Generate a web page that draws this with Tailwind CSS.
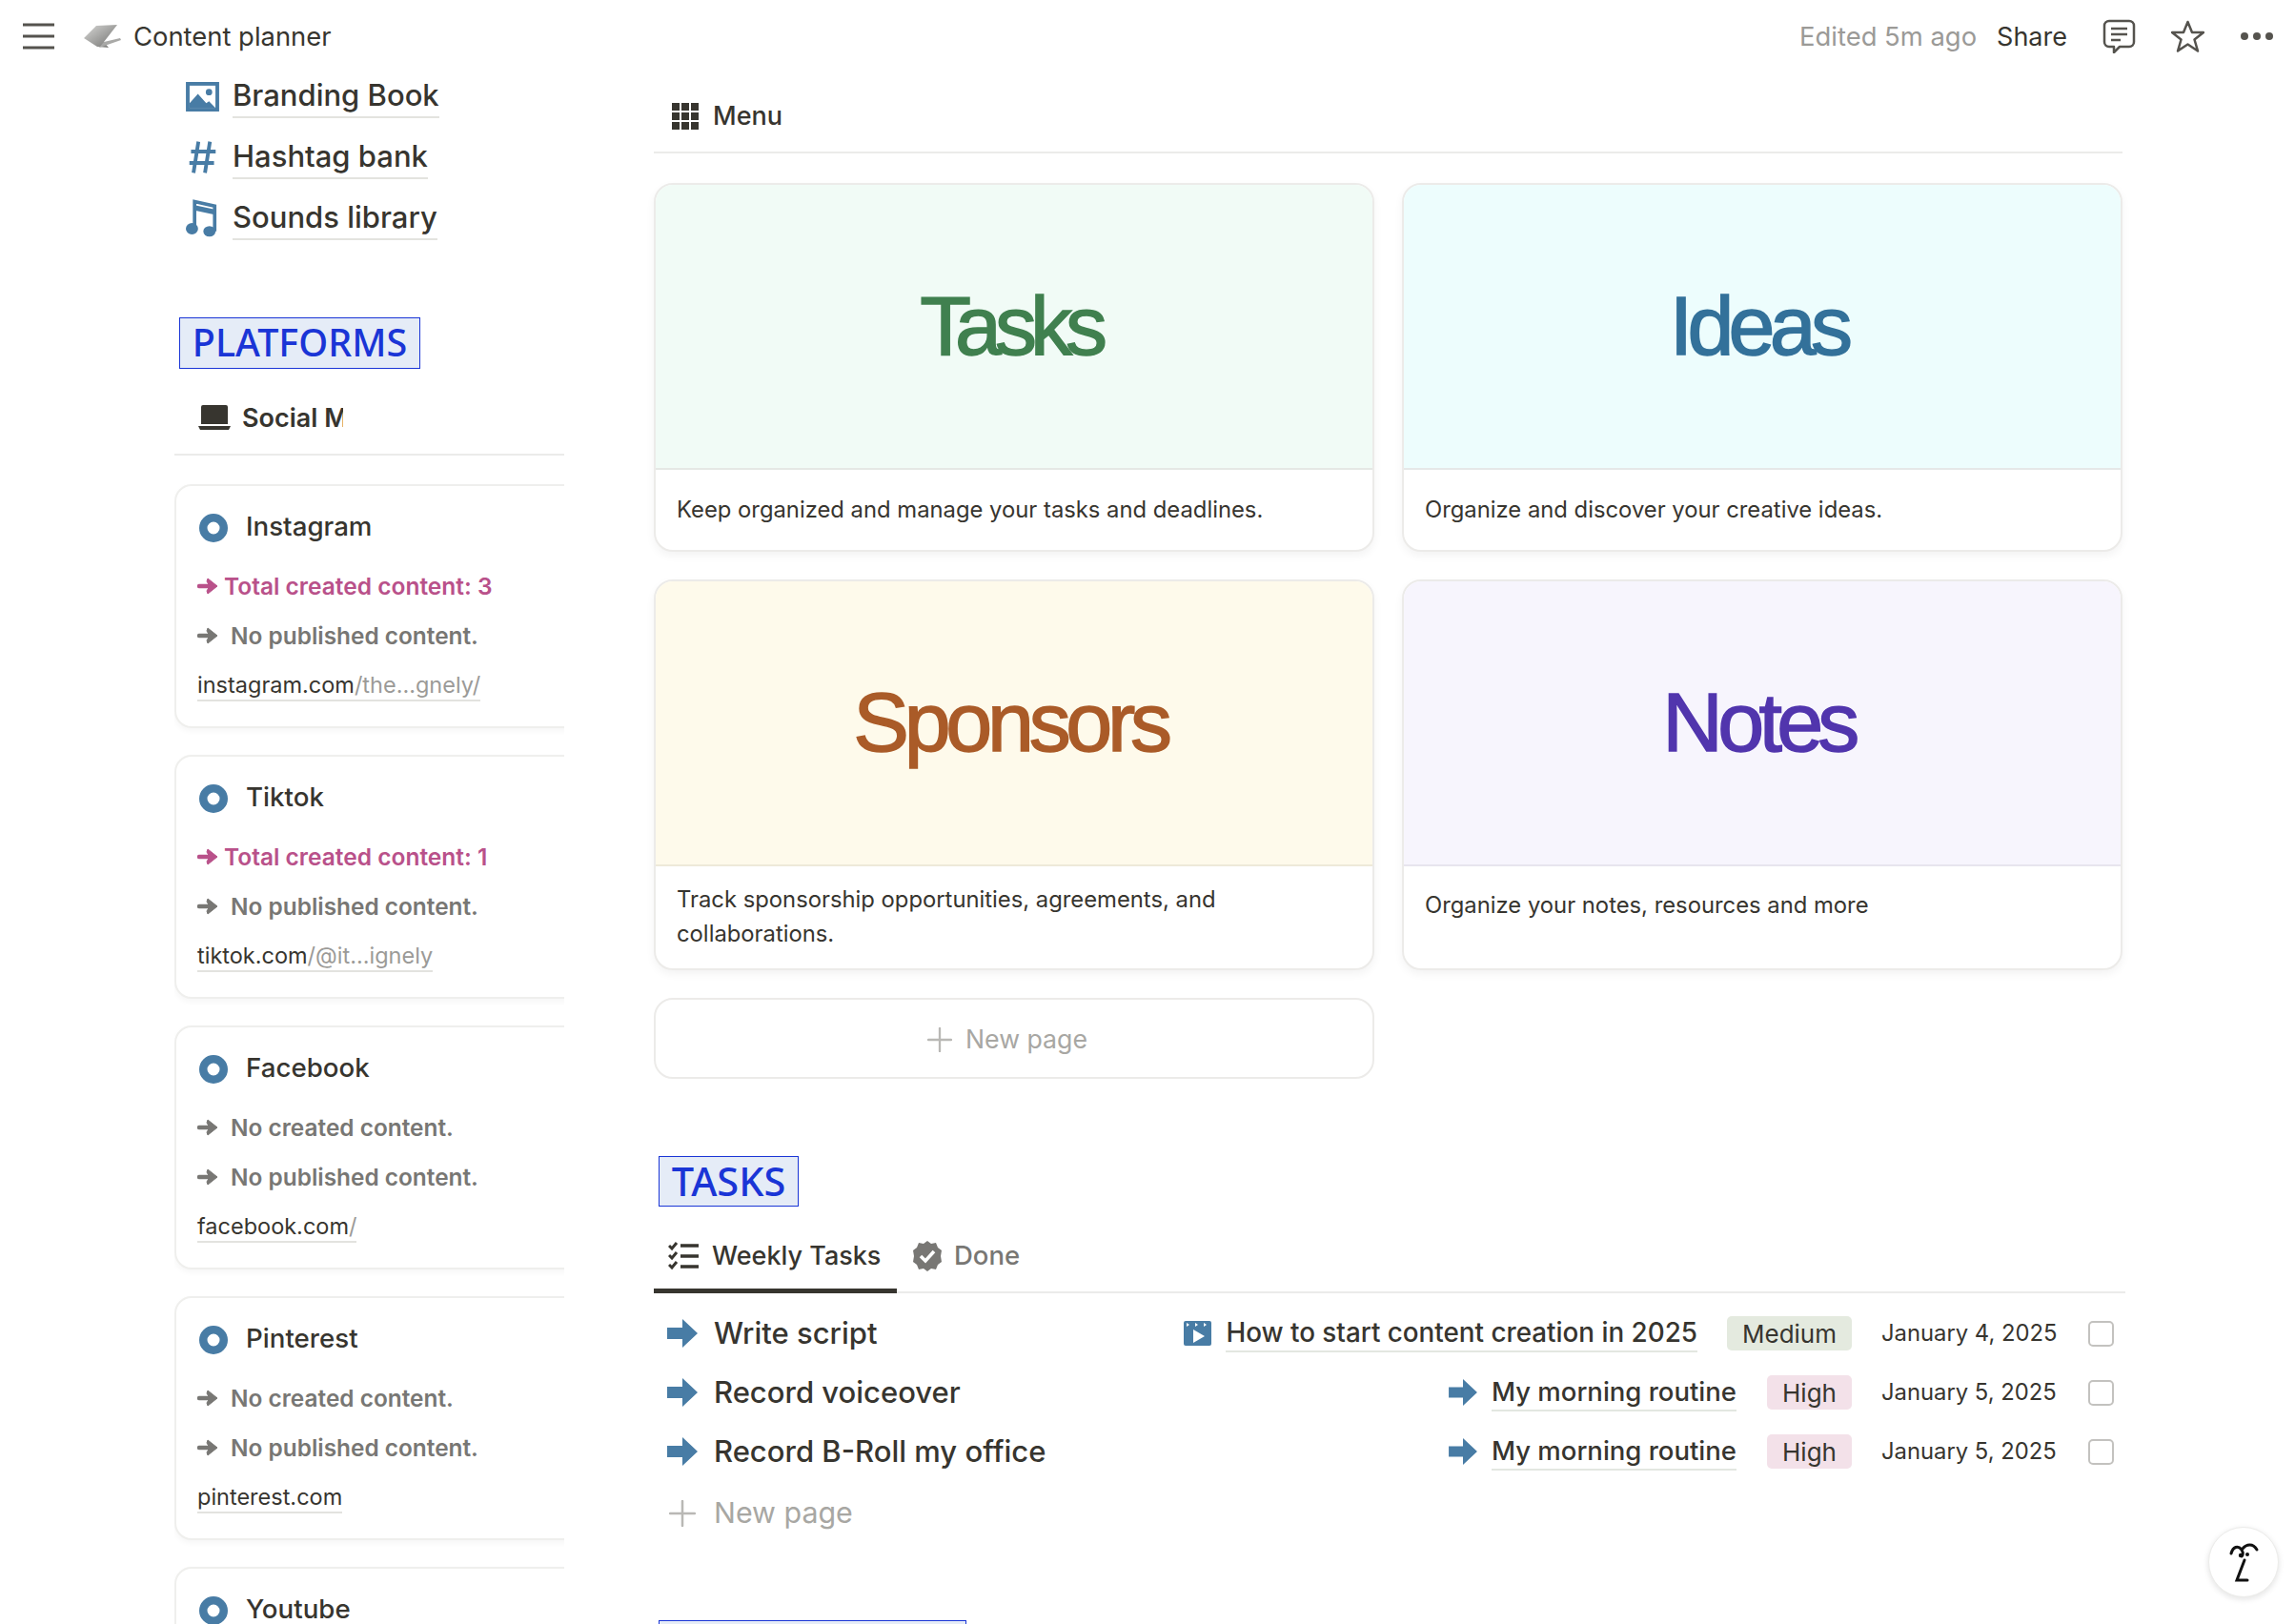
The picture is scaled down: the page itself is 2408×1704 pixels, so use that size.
<!DOCTYPE html>
<html>
<head>
  <title>Content planner</title>
  <script src="https://cdn.jsdelivr.net/npm/@tailwindcss/browser@4"></script>
</head>
<body class="bg-white">
  <svg class="hidden">
    <symbol id="block-arrow" viewBox="0 0 32 30"><path d="M0 9h16V0l16 15-16 15v-9H0z" fill="#487ca5"/></symbol>
    <symbol id="small-arrow" viewBox="0 0 22 18"><path d="M2 9h15" fill="none" stroke="currentColor" stroke-width="4.500" stroke-linecap="round"/><path d="M11 1l10 8-10 8-1-3 3-5-3-5z" fill="currentColor" stroke="currentColor" stroke-width="1" stroke-linejoin="round"/></symbol>
    <symbol id="ring" viewBox="0 0 30 30"><circle cx="15" cy="15" r="10.750" fill="none" stroke="#487ca5" stroke-width="8.500"/></symbol>
    <symbol id="plus" viewBox="0 0 28 28"><path d="M14 1v26M1 14h26" stroke="#b9b8b5" stroke-width="2.500" stroke-linecap="round"/></symbol>
  </svg>

  <div class="relative w-[2408px] h-[1704px] overflow-hidden font-['Inter',sans-serif] text-[#37352f]">
    <!-- top bar -->
    <header class="h-[76px] flex items-center pl-[24px] pr-[22px]">
      <svg class="w-[33px] h-[30px] text-[#55534e]" viewBox="0 0 33 30"><path d="M0 3h33M0 15h33M0 27h33" stroke="currentColor" stroke-width="3"/></svg>
      <svg class="ml-[31px] w-[39px] h-[26px]" viewBox="0 0 39 26">
        <defs><linearGradient id="lid" x1="0" y1="0" x2="1" y2="1"><stop offset="0" stop-color="#d8d8d6"/><stop offset="1" stop-color="#6f6f6d"/></linearGradient></defs>
        <path d="M0 15 13 2l22-1-14 18 5 6-12-1z" fill="url(#lid)"/>
        <path d="M21 19 38 15l1 2-23 8z" fill="#a9a9a7"/>
      </svg>
      <span class="ml-[13px] pt-[2px] text-[27.400px]">Content planner</span>
      <span class="ml-auto pt-[2px] text-[27.400px] text-[#9b9a97]">Edited 5m ago</span>
      <span class="ml-[21px] pt-[2px] text-[27px]">Share</span>
      <svg class="ml-[37px] w-[35px] h-[36px] text-[#55534e]" viewBox="0 0 35 36" fill="none" stroke="currentColor" stroke-width="2.500"><path d="M7 2h21a5 5 0 0 1 5 5v17a5 5 0 0 1-5 5H18l-6 6v-6H7a5 5 0 0 1-5-5V7a5 5 0 0 1 5-5z" stroke-linejoin="round"/><path d="M9 10h17M9 16h17M9 22h10"/></svg>
      <svg class="ml-[37px] w-[35px] h-[35px] text-[#55534e]" viewBox="0 0 35 35" fill="none" stroke="currentColor" stroke-width="2.500" stroke-linejoin="round"><path d="m17.500 2 4.500 11h12l-9.500 7.500 3.500 12-10.500-7-10.500 7 3.500-12L1 13h12z"/></svg>
      <svg class="ml-[37px] w-[36px] h-[10px] text-[#55534e]" viewBox="0 0 36 10" fill="currentColor"><circle cx="5" cy="5" r="4"/><circle cx="18" cy="5" r="4"/><circle cx="31" cy="5" r="4"/></svg>
    </header>

    <div class="flex">
      <!-- left column -->
      <aside class="ml-[182px] w-[410px] pl-px">
        <nav class="mt-[-7px]">
          <a class="h-[64px] flex items-center pl-[12px]">
            <svg class="w-[35px] h-[31px]" viewBox="0 0 36 32"><rect width="36" height="32" fill="#487ca5"/><rect x="4" y="4" width="28" height="24" fill="#fff"/><path d="M4 28V23l9-10 9 10 3-2 7 7z" fill="#487ca5"/><circle cx="25" cy="11" r="3.500" fill="#487ca5"/></svg>
            <span class="ml-[14px] text-[31px] font-medium leading-[44px] border-b-2 border-[#e3e3df]">Branding Book</span>
          </a>
          <a class="h-[64px] flex items-center pl-[14px]">
            <svg class="w-[31px] h-[38px]" viewBox="0 0 36 40"><path d="M13 1 7 39M27 1l-6 38M4 13h30M2 27h30" fill="none" stroke="#487ca5" stroke-width="4.500"/></svg>
            <span class="ml-[16px] text-[31px] font-medium leading-[44px] border-b-2 border-[#e3e3df]">Hashtag bank</span>
          </a>
          <a class="h-[64px] flex items-center pl-[12px]">
            <svg class="w-[33px] h-[40px]" viewBox="0 0 36 42"><path d="M10 33V2l23 5v29" fill="none" stroke="#487ca5" stroke-width="4"/><path d="M10 6l23 5v6L10 12z" fill="#487ca5"/><ellipse cx="7" cy="33" rx="7" ry="6.500" fill="#487ca5"/><ellipse cx="27" cy="36" rx="7" ry="6" fill="#487ca5"/></svg>
            <span class="ml-[16px] text-[31px] font-medium leading-[44px] border-b-2 border-[#e3e3df]">Sounds library</span>
          </a>
        </nav>

        <h2 class="mt-[72px] ml-[5px] w-[253px] h-[54px] flex items-center justify-center bg-[#e5ecf7] border border-[#1a35d6] text-[#1a35d6] font-['Noto_Sans',sans-serif] font-medium text-[39.500px]">PLATFORMS</h2>

        <div class="mt-[13px] h-[78px] border-b-2 border-[#ebebea] flex items-center pt-[3px] pl-[25px]">
          <svg class="w-[34px] h-[26px] mb-[4px]" viewBox="0 0 34 26"><path d="M5 0h24a2 2 0 0 1 2 2v18H3V2a2 2 0 0 1 2-2zM0 22h34l-2 4H2z" fill="#37352f"/></svg>
          <span class="ml-[12px] w-[106px] overflow-hidden whitespace-nowrap text-[27px] font-semibold">Social Media</span>
        </div>

        <div id="platforms" class="mt-[30px] overflow-hidden flex flex-col gap-[28px] pb-[20px]"></div>
      </aside>

      <!-- main column -->
      <main class="ml-[94px] w-[1544px]">
        <div class="mt-[-8px] h-[93px] w-[1541px] border-b-2 border-[#ebebea] flex items-center pl-[19px] pt-[17px]">
          <svg class="w-[28px] h-[28px]" viewBox="0 0 28 28" fill="#37352f"><path d="M0 0h8v8H0zM10 0h8v8h-8zM20 0h8v8h-8zM0 10h8v8H0zM10 10h8v8h-8zM20 10h8v8h-8zM0 20h8v8H0zM10 20h8v8h-8zM20 20h8v8h-8z"/></svg>
          <span class="ml-[15px] text-[27px] font-medium">Menu</span>
        </div>

        <div class="mt-[31px] grid grid-cols-[756px_756px] gap-x-[29px] gap-y-[29px] w-[1541px]">
          <article class="h-[387px] bg-white border-2 border-[#ecebe9] rounded-[20px] overflow-hidden shadow-[0_4px_10px_rgba(15,15,15,0.05)]">
            <div class="h-[299px] bg-[#f1fbf6] border-b-2 border-[#e5e8e5] flex items-center justify-center pr-[8px] pb-[2px] font-['Liberation_Sans',sans-serif] text-[88px] tracking-[-0.08em] text-[#40804f] [-webkit-text-stroke:1.500px_#40804f]">Tasks</div>
            <p class="px-[22px] pt-[24px] text-[23.800px] leading-[36px]">Keep organized and manage your tasks and deadlines.</p>
          </article>
          <article class="h-[387px] bg-white border-2 border-[#ecebe9] rounded-[20px] overflow-hidden shadow-[0_4px_10px_rgba(15,15,15,0.05)]">
            <div class="h-[299px] bg-[#edfdfd] border-b-2 border-[#e5e8e8] flex items-center justify-center pr-[8px] pb-[2px] font-['Liberation_Sans',sans-serif] text-[88px] tracking-[-0.065em] text-[#33719a] [-webkit-text-stroke:1.500px_#33719a]">Ideas</div>
            <p class="px-[22px] pt-[24px] text-[23.800px] leading-[36px]">Organize and discover your creative ideas.</p>
          </article>
          <article class="h-[410px] bg-white border-2 border-[#ecebe9] rounded-[20px] overflow-hidden shadow-[0_4px_10px_rgba(15,15,15,0.05)]">
            <div class="h-[299px] bg-[#fefaeb] border-b-2 border-[#eee9d9] flex items-center justify-center pr-[8px] pb-[2px] font-['Liberation_Sans',sans-serif] text-[88px] tracking-[-0.06em] text-[#aa5b28] [-webkit-text-stroke:1.500px_#aa5b28]">Sponsors</div>
            <p class="px-[22px] pt-[17px] text-[23.800px] leading-[36px]">Track sponsorship opportunities, agreements, and collaborations.</p>
          </article>
          <article class="h-[410px] bg-white border-2 border-[#ecebe9] rounded-[20px] overflow-hidden shadow-[0_4px_10px_rgba(15,15,15,0.05)]">
            <div class="h-[299px] bg-[#f7f5fd] border-b-2 border-[#e7e5ee] flex items-center justify-center pr-[8px] pb-[2px] font-['Liberation_Sans',sans-serif] text-[88px] tracking-[-0.065em] text-[#5135ad] [-webkit-text-stroke:1.500px_#5135ad]">Notes</div>
            <p class="px-[22px] pt-[23px] text-[23.800px] leading-[36px]">Organize your notes, resources and more</p>
          </article>
          <div class="h-[85px] border-2 border-[#ecebe9] rounded-[20px] flex items-center justify-center pr-[14px] pt-[2px] text-[26.700px] text-[#a8a7a3]">
            <svg class="w-[26px] h-[26px] mr-[14px]"><use href="#plus"/></svg>New page
          </div>
        </div>

        <h2 class="mt-[81px] ml-[5px] w-[147px] h-[53px] flex items-center justify-center bg-[#e5ecf7] border border-[#1a35d6] text-[#1a35d6] font-['Noto_Sans',sans-serif] font-medium text-[41.500px]">TASKS</h2>

        <div class="mt-[24px] h-[67px] flex border-b-2 border-[#ebebea] text-[27px] font-medium">
          <div class="w-[255px] mb-[-2px] border-b-[5px] border-[#37352f] flex items-center pl-[15px] pb-[6px]">
            <svg class="w-[32px] h-[30px]" viewBox="0 0 32 30" fill="none" stroke="#37352f" stroke-width="3"><path d="m1 4 3 3 5-6M1 14l3 3 5-6M1 24l3 3 5-6"/><path d="M13 4h19M13 15h19M13 26h19" stroke-width="3.500"/></svg>
            <span class="ml-[14px]">Weekly Tasks</span>
          </div>
          <div class="flex items-center pl-[17px] pb-[9px] text-[#787774] text-[27.500px]">
            <svg class="w-[30px] h-[32px]" viewBox="0 0 30 32"><path d="M15 0l4 3 5-1 2 5 4 3-1 6 1 6-4 3-2 5-5-1-4 3-4-3-5 1-2-5-4-3 1-6-1-6 4-3 2-5 5 1z" fill="#787774"/><path d="m8 16 5 5 9-10" fill="none" stroke="#fff" stroke-width="3.500"/></svg>
            <span class="ml-[13px]">Done</span>
          </div>
        </div>

        <ul class="mt-[11px] w-[1544px] text-[31px] font-medium">
          <li class="h-[62px] flex items-center pl-[14px] pr-[12px]">
            <svg class="w-[32px] h-[30px]"><use href="#block-arrow"/></svg>
            <span class="ml-[17px]">Write script</span>
            <div class="ml-auto flex items-center text-[27.800px] font-medium">
              <svg class="w-[29px] h-[26px]" viewBox="0 0 29 26"><path d="M2 0h25a2 2 0 0 1 2 2v22a2 2 0 0 1-2 2H2a2 2 0 0 1-2-2V2a2 2 0 0 1 2-2z" fill="#487ca5"/><path d="M3 2v4l3-2zM12 2v4l3-2zM21 2v4l3-2z" fill="#fff"/><path d="M10 9v14l12-7z" fill="#fff"/></svg>
              <span class="ml-[15px] border-b-2 border-[#e3e7e1] leading-[38px]">How to start content creation in 2025</span>
              <span class="ml-[31px] w-[131px] h-[36px] flex items-center justify-center rounded-[5px] bg-[#e4eadf] text-[26px] font-normal">Medium</span>
            </div>
            <span class="ml-[31px] w-[184px] text-[23.800px] font-normal whitespace-nowrap">January 4, 2025</span>
            <span class="ml-[33px] w-[27px] h-[27px] rounded-[5px] border-2 border-[#c3c2bf]"></span>
          </li>
          <li class="h-[62px] flex items-center pl-[14px] pr-[12px]">
            <svg class="w-[32px] h-[30px]"><use href="#block-arrow"/></svg>
            <span class="ml-[17px]">Record voiceover</span>
            <div class="ml-auto flex items-center text-[27.500px] font-medium">
              <svg class="w-[30px] h-[28px]"><use href="#block-arrow"/></svg>
              <span class="ml-[15px] border-b-2 border-[#e3e7e1] leading-[38px]">My morning routine</span>
              <span class="ml-[32px] w-[89px] h-[36px] flex items-center justify-center rounded-[5px] bg-[#f3e1e9] text-[26px] font-normal">High</span>
            </div>
            <span class="ml-[31px] w-[184px] text-[23.800px] font-normal whitespace-nowrap">January 5, 2025</span>
            <span class="ml-[33px] w-[27px] h-[27px] rounded-[5px] border-2 border-[#c3c2bf]"></span>
          </li>
          <li class="h-[62px] flex items-center pl-[14px] pr-[12px]">
            <svg class="w-[32px] h-[30px]"><use href="#block-arrow"/></svg>
            <span class="ml-[17px]">Record B-Roll my office</span>
            <div class="ml-auto flex items-center text-[27.500px] font-medium">
              <svg class="w-[30px] h-[28px]"><use href="#block-arrow"/></svg>
              <span class="ml-[15px] border-b-2 border-[#e3e7e1] leading-[38px]">My morning routine</span>
              <span class="ml-[32px] w-[89px] h-[36px] flex items-center justify-center rounded-[5px] bg-[#f3e1e9] text-[26px] font-normal">High</span>
            </div>
            <span class="ml-[31px] w-[184px] text-[23.800px] font-normal whitespace-nowrap">January 5, 2025</span>
            <span class="ml-[33px] w-[27px] h-[27px] rounded-[5px] border-2 border-[#c3c2bf]"></span>
          </li>
          <li class="h-[68px] flex items-center pl-[16px] text-[30.400px] text-[#a8a7a3] font-normal">
            <svg class="w-[28px] h-[28px]"><use href="#plus"/></svg>
            <span class="ml-[19px]">New page</span>
          </li>
        </ul>

        <div class="mt-[78px] ml-[5px] w-[323px] h-[53px] bg-[#e5ecf7] border border-[#1a35d6]"></div>
      </main>
    </div>

    <!-- help button -->
    <div class="absolute left-[2317px] top-[1602px] w-[74px] h-[74px] rounded-full bg-white border border-[#ececea] shadow-[0_2px_6px_rgba(15,15,15,0.12)] flex items-center justify-center">
      <svg class="w-[34px] h-[44px]" viewBox="0 0 34 44" fill="none" stroke="#111" stroke-width="3" stroke-linecap="round"><path d="M4 13C6 6 11 4 15 9c3 5 0 7 0 7M16 8c4-5 11-6 15 1"/><path d="M18 20 10 41h11"/><circle cx="14" cy="15" r="2.200" fill="#111" stroke="none"/><circle cx="21" cy="14" r="2" fill="#111" stroke="none"/></svg>
    </div>
  </div>

  <script>
    const platforms = [
      { name: 'Instagram', created: 3, host: 'instagram.com', rest: '/the...gnely/' },
      { name: 'Tiktok', created: 1, host: 'tiktok.com', rest: '/@it...ignely' },
      { name: 'Facebook', created: 0, host: 'facebook.com', rest: '/' },
      { name: 'Pinterest', created: 0, host: 'pinterest.com', rest: '' },
      { name: 'Youtube', created: 0, host: 'youtube.com', rest: '' },
    ];

    document.getElementById('platforms').innerHTML = platforms.map(p => `
      <div class="w-[450px] h-[256px] shrink-0 border-2 border-[#efefed] rounded-[18px] bg-white shadow-[0_3px_6px_rgba(15,15,15,0.04)] pl-[22px]">
        <div class="h-[52px] mt-[17px] flex items-center">
          <svg class="w-[30px] h-[30px] ml-[2px] mt-[2px]"><use href="#ring"/></svg>
          <span class="ml-[19px] text-[27.700px] font-medium">${p.name}</span>
        </div>
        ${p.created
          ? `<div class="h-[52px] mt-[10px] flex items-center text-[24.500px] font-semibold text-[#b9518a]">
              <svg class="w-[22px] h-[18px]"><use href="#small-arrow"/></svg>
              <span class="ml-[6px]">Total created content: ${p.created}</span>
            </div>`
          : `<div class="h-[52px] mt-[10px] flex items-center text-[24.400px] font-semibold text-[#787774]">
              <svg class="w-[22px] h-[18px]"><use href="#small-arrow"/></svg>
              <span class="ml-[13px]">No created content.</span>
            </div>`}
        <div class="h-[52px] flex items-center text-[24.400px] font-semibold text-[#787774]">
          <svg class="w-[22px] h-[18px]"><use href="#small-arrow"/></svg>
          <span class="ml-[13px]">No published content.</span>
        </div>
        <div class="h-[54px] flex items-center text-[23.500px]">
          <span class="border-b-2 border-[#e3e3df] leading-[30px]">${p.host}<span class="text-[#9b9a97]">${p.rest}</span></span>
        </div>
      </div>
    `).join('');
  </script>
</body>
</html>
